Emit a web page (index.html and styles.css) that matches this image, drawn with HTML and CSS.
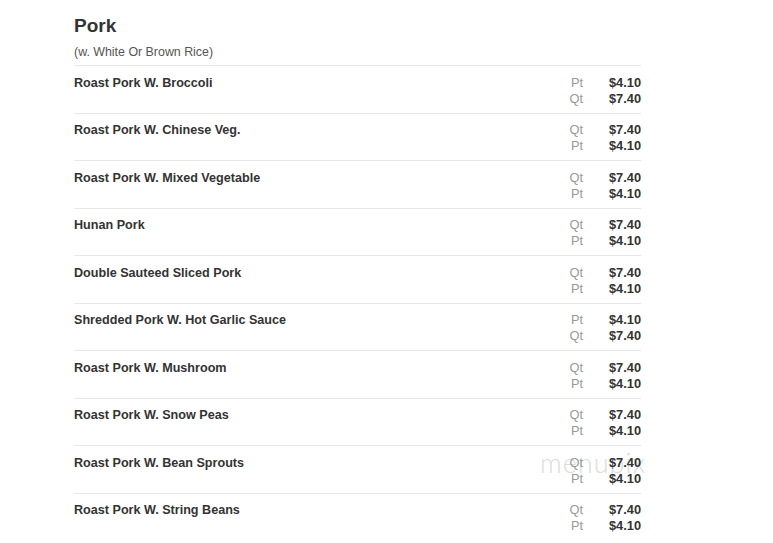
FILE: index.html
```html
<!DOCTYPE html>
<html>
<head>
<meta charset="utf-8">
<link rel="stylesheet" href="styles.css">
</head>
<body>
<div class="menu">
  <h1 class="title">Pork</h1>
  <div class="subtitle">(w. White Or Brown Rice)</div>
  <div class="list">
    <div class="item"><div class="name">Roast Pork W. Broccoli</div><div class="prices"><span class="sz">Pt</span><span class="pr">$4.10</span><span class="sz">Qt</span><span class="pr">$7.40</span></div></div>
    <div class="item"><div class="name">Roast Pork W. Chinese Veg.</div><div class="prices"><span class="sz">Qt</span><span class="pr">$7.40</span><span class="sz">Pt</span><span class="pr">$4.10</span></div></div>
    <div class="item"><div class="name">Roast Pork W. Mixed Vegetable</div><div class="prices"><span class="sz">Qt</span><span class="pr">$7.40</span><span class="sz">Pt</span><span class="pr">$4.10</span></div></div>
    <div class="item"><div class="name">Hunan Pork</div><div class="prices"><span class="sz">Qt</span><span class="pr">$7.40</span><span class="sz">Pt</span><span class="pr">$4.10</span></div></div>
    <div class="item"><div class="name">Double Sauteed Sliced Pork</div><div class="prices"><span class="sz">Qt</span><span class="pr">$7.40</span><span class="sz">Pt</span><span class="pr">$4.10</span></div></div>
    <div class="item"><div class="name">Shredded Pork W. Hot Garlic Sauce</div><div class="prices"><span class="sz">Pt</span><span class="pr">$4.10</span><span class="sz">Qt</span><span class="pr">$7.40</span></div></div>
    <div class="item"><div class="name">Roast Pork W. Mushroom</div><div class="prices"><span class="sz">Qt</span><span class="pr">$7.40</span><span class="sz">Pt</span><span class="pr">$4.10</span></div></div>
    <div class="item"><div class="name">Roast Pork W. Snow Peas</div><div class="prices"><span class="sz">Qt</span><span class="pr">$7.40</span><span class="sz">Pt</span><span class="pr">$4.10</span></div></div>
    <div class="item"><div class="name">Roast Pork W. Bean Sprouts</div><div class="watermark">menupix</div><div class="prices"><span class="sz">Qt</span><span class="pr">$7.40</span><span class="sz">Pt</span><span class="pr">$4.10</span></div></div>
    <div class="item"><div class="name">Roast Pork W. String Beans</div><div class="prices"><span class="sz">Qt</span><span class="pr">$7.40</span><span class="sz">Pt</span><span class="pr">$4.10</span></div></div>
  </div>
</div>
</body>
</html>
```
FILE: styles.css
```css
html, body {
  margin: 0;
  padding: 0;
  background: #fff;
}
body {
  font-family: "Liberation Sans", Arial, sans-serif;
  color: #333;
}
.menu {
  width: 567px;
  padding: 13px 0 0 74px;
}
.title {
  margin: 0;
  font-size: 19px;
  font-weight: bold;
  line-height: 26px;
  color: #333;
}
.subtitle {
  font-size: 12.4px;
  color: #555;
  line-height: 16px;
  margin-top: 5px;
  padding-bottom: 5px;
}
.item {
  display: flex;
  justify-content: space-between;
  border-top: 1px solid #e8e8e8;
  padding: 8.5px 0 6px;
  position: relative;
}
.name {
  font-size: 12.6px;
  font-weight: bold;
  line-height: 16px;
  color: #333;
}
.prices {
  display: grid;
  grid-template-columns: auto auto;
  column-gap: 26px;
  font-size: 12.8px;
  line-height: 16px;
  position: relative;
}
.sz {
  color: #999;
  text-align: right;
}
.pr {
  font-weight: bold;
  color: #333;
  text-align: right;
}
.watermark {
  position: absolute;
  left: 466px;
  top: 2px;
  font-family: "Lato", "Open Sans", sans-serif;
  font-weight: 300;
  font-size: 27px;
  letter-spacing: 1px;
  color: #dcdcdc;
  line-height: 30px;
}
```
